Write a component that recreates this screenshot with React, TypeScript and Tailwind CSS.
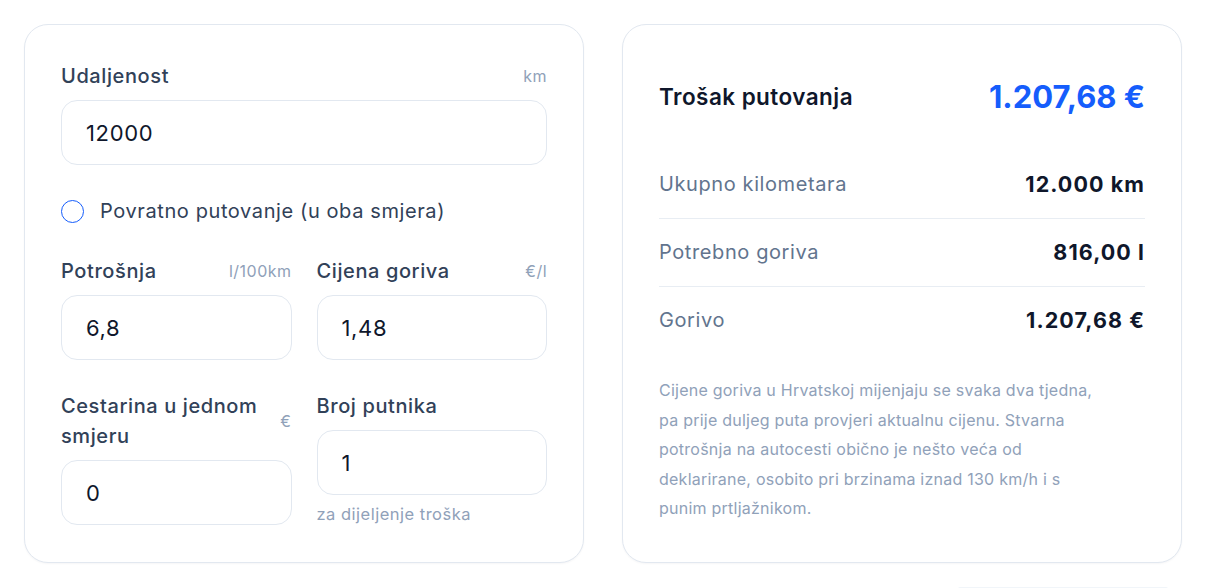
import { useState } from "react";

type FieldProps = {
  label: string;
  unit: string;
  value: string;
  hint?: string;
};

const Field = ({ label, unit, value, hint }: FieldProps) => (
  <div className="flex flex-col">
    <div className="flex items-center justify-between gap-3 mb-[9px]">
      <span className="text-[20px] leading-[30px] font-medium tracking-[0.03em] text-slate-700">{label}</span>
      <span className="text-[16px] leading-[30px] tracking-[0.03em] text-slate-400 whitespace-nowrap">{unit}</span>
    </div>
    <input
      defaultValue={value}
      className="h-[65px] w-full rounded-2xl border border-slate-200 bg-white px-6 text-[22px] tracking-[0.03em] text-slate-900 outline-none"
    />
    {hint && <p className="mt-[7px] text-[16.5px] leading-6 tracking-[0.03em] text-slate-400">{hint}</p>}
  </div>
);

const rows = [
  { label: "Ukupno kilometara", value: "12.000 km" },
  { label: "Potrebno goriva", value: "816,00 l" },
  { label: "Gorivo", value: "1.207,68 €" },
];

const note = [
  "Cijene goriva u Hrvatskoj mijenjaju se svaka dva tjedna,",
  "pa prije duljeg puta provjeri aktualnu cijenu. Stvarna",
  "potrošnja na autocesti obično je nešto veća od",
  "deklarirane, osobito pri brzinama iznad 130 km/h i s",
  "punim prtljažnikom.",
];

export default function App() {
  const [roundTrip, setRoundTrip] = useState(false);

  return (
    <div className="bg-white px-6 pt-6 font-['Inter','Noto_Sans',sans-serif]">
      <div className="grid grid-cols-2 gap-[38px]">
        {/* inputs */}
        <div className="rounded-[24px] border border-slate-200 bg-white p-9 shadow-[0_1px_2px_rgba(15,23,42,0.04)]">
          <Field label="Udaljenost" unit="km" value="12000" />

          <label className="mt-[31px] flex h-[30px] cursor-pointer items-center gap-4">
            <button
              type="button"
              onClick={() => setRoundTrip(!roundTrip)}
              className="flex h-[23px] w-[23px] items-center justify-center rounded-full border-[1.5px] border-blue-600 bg-white"
            >
              {roundTrip && <span className="h-3 w-3 rounded-full bg-blue-600" />}
            </button>
            <span className="text-[20px] tracking-[0.03em] text-slate-700">Povratno putovanje (u oba smjera)</span>
          </label>

          <div className="mt-[30px] grid grid-cols-2 gap-x-[25px] gap-y-[31px]">
            <Field label="Potrošnja" unit="l/100km" value="6,8" />
            <Field label="Cijena goriva" unit="€/l" value="1,48" />
            <Field label="Cestarina u jednom smjeru" unit="€" value="0" />
            <Field label="Broj putnika" unit="" value="1" hint="za dijeljenje troška" />
          </div>
        </div>

        {/* results */}
        <div className="rounded-[24px] border border-slate-200 bg-white p-9 shadow-[0_1px_2px_rgba(15,23,42,0.04)]">
          <div className="flex h-[72px] items-center justify-between">
            <h2 className="text-[22.5px] font-semibold tracking-[0.02em] text-slate-900">Trošak putovanja</h2>
            <span className="text-[31px] font-bold text-blue-600">1.207,68 €</span>
          </div>

          <div className="mt-[18px]">
            {rows.map((row, i) => (
              <div
                key={row.label}
                className={`flex items-center justify-between py-[19px] ${i < rows.length - 1 ? "border-b border-slate-200/80" : ""}`}
              >
                <span className="text-[20px] leading-[29px] tracking-[0.03em] text-slate-500">{row.label}</span>
                <span className="text-[21.5px] leading-[29px] font-bold tracking-[0.05em] text-slate-900">{row.value}</span>
              </div>
            ))}
          </div>

          <p className="mt-[22px] text-[16px] leading-[29.5px] tracking-[0.015em] text-slate-400">
            {note.map((line) => (
              <span key={line} className="block whitespace-nowrap">{line}</span>
            ))}
          </p>
        </div>
      </div>

      <div className="mt-6 flex justify-end pr-[14px]">
        <div className="h-[2px] w-[210px] rounded-t-xl border-t border-slate-100" />
      </div>
    </div>
  );
}
